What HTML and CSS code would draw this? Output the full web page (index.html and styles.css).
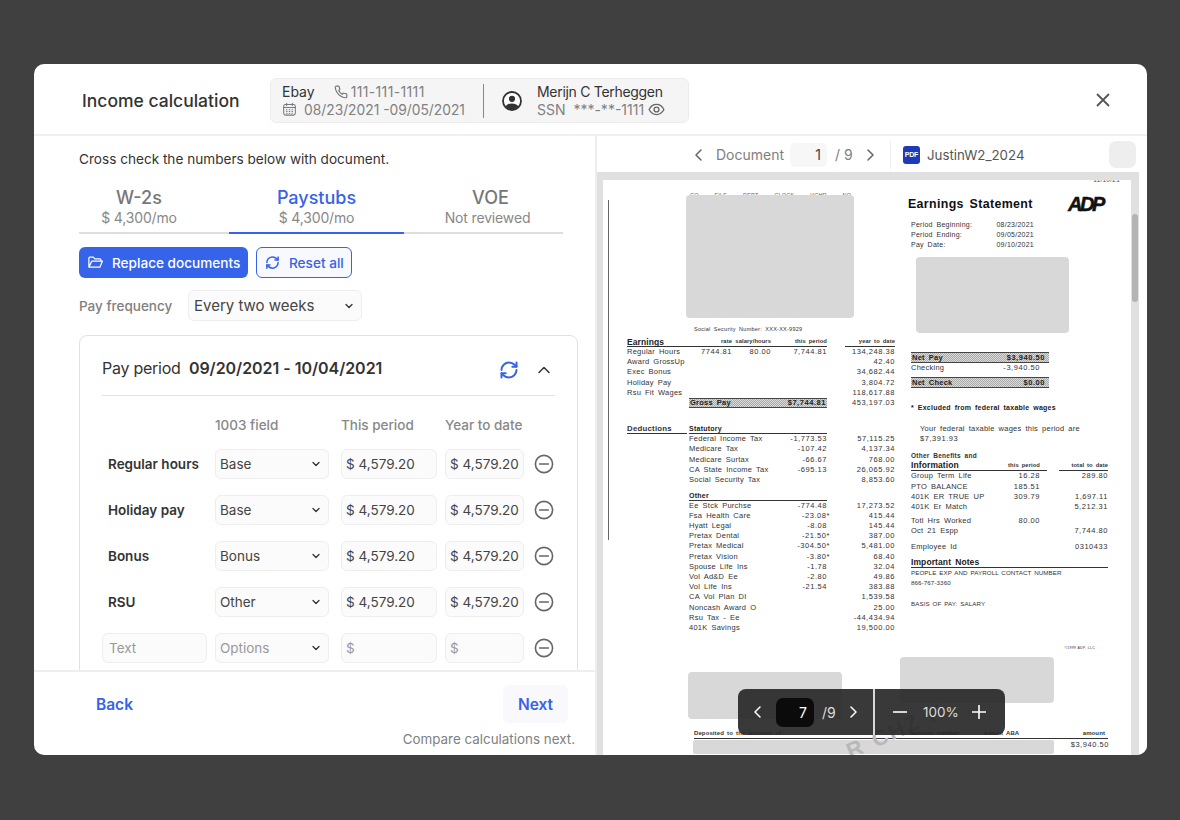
FILE: index.html
```html
<!DOCTYPE html>
<html lang="en">
<head>
<meta charset="utf-8">
<title>Income calculation</title>
<link rel="stylesheet" href="styles.css">
</head>
<body>
<svg class="defs" width="0" height="0" aria-hidden="true">
  <symbol id="i-down" viewBox="0 0 12 12"><path d="M3 4.500 6 7.500 9 4.500" fill="none" stroke="currentColor" stroke-width="1.300" stroke-linecap="round" stroke-linejoin="round"/></symbol>
  <symbol id="i-left" viewBox="0 0 16 16"><path d="M10 3 5 8l5 5" fill="none" stroke="currentColor" stroke-width="1.500" stroke-linecap="round" stroke-linejoin="round"/></symbol>
  <symbol id="i-right" viewBox="0 0 16 16"><path d="m6 3 5 5-5 5" fill="none" stroke="currentColor" stroke-width="1.500" stroke-linecap="round" stroke-linejoin="round"/></symbol>
  <symbol id="i-sync" viewBox="0 0 24 24"><g fill="none" stroke="currentColor" stroke-width="2.400" stroke-linecap="round" stroke-linejoin="round"><path d="M3 12a9 9 0 0 1 9-9 9.750 9.750 0 0 1 6.740 2.740L21 8"/><path d="M21 3v5h-5"/><path d="M21 12a9 9 0 0 1-9 9 9.750 9.750 0 0 1-6.740-2.740L3 16"/><path d="M8 16H3v5"/></g></symbol>
  <symbol id="i-minus" viewBox="0 0 20 20"><g fill="none" stroke="currentColor" stroke-width="1.600" stroke-linecap="round"><circle cx="10" cy="10" r="8.600"/><path d="M5.600 10h8.800"/></g></symbol>
</svg>
<div class="backdrop">
  <div class="modal">
    <header class="head">
      <h1 class="title">Income calculation</h1>
      <div class="info">
        <div class="info-co">
          <div class="info-line"><span class="info-name">Ebay</span><svg class="ic-phone" viewBox="0 0 24 24" width="14" height="14"><path d="M22 16.900v3a2 2 0 0 1-2.200 2 19.800 19.800 0 0 1-8.600-3.100 19.500 19.500 0 0 1-6-6A19.800 19.800 0 0 1 2.100 4.200 2 2 0 0 1 4.100 2h3a2 2 0 0 1 2 1.700c.1 1 .4 1.900.7 2.800a2 2 0 0 1-.5 2.100L8.100 9.900a16 16 0 0 0 6 6l1.300-1.300a2 2 0 0 1 2.100-.4c.9.3 1.800.6 2.800.7a2 2 0 0 1 1.700 2Z" fill="none" stroke="#777" stroke-width="2"/></svg><span class="info-mute info-tel">111-111-1111</span></div>
          <div class="info-line"><svg class="ic-cal" viewBox="0 0 16 16" width="15" height="15"><g fill="none" stroke="#777" stroke-width="1.100" stroke-linecap="round"><rect x="1.800" y="2.600" width="12.400" height="11.400" rx="2"/><path d="M1.800 5.800h12.400M5 1.400v2.200M11 1.400v2.200"/><path d="M4.800 8.200h.6M7.700 8.200h.6M10.600 8.200h.6M4.800 10.200h.6M7.700 10.200h.6M10.600 10.200h.6M4.800 12h.6M7.700 12h.6M10.600 12h.6"/></g></svg><span class="info-mute info-date">08/23/2021 -09/05/2021</span></div>
        </div>
        <div class="info-sep"></div>
        <svg class="ic-user" viewBox="0 0 20 20" width="20" height="20"><circle cx="10" cy="10" r="9" fill="#fff" stroke="#333" stroke-width="1.800"/><circle cx="10" cy="7.800" r="3.100" fill="#333"/><path d="M3.600 15.600C5 13 7.400 12.400 10 12.400s5 .6 6.400 3.200A9 9 0 0 1 10 19a9 9 0 0 1-6.400-3.400Z" fill="#333"/></svg>
        <div class="info-person">
          <div class="info-line"><span class="info-name info-full">Merijn C Terheggen</span></div>
          <div class="info-line"><span class="info-mute">SSN&nbsp; ***-**-1111</span><svg class="ic-eye" viewBox="0 0 18 18" width="17" height="17"><g fill="none" stroke="#666" stroke-width="1.400"><path d="M1.200 9C3 5.400 5.800 3.600 9 3.600s6 1.800 7.800 5.400c-1.800 3.600-4.600 5.400-7.800 5.400S3 12.600 1.200 9Z"/><circle cx="9" cy="9" r="2.600"/></g></svg></div>
        </div>
      </div>
      <svg class="close" viewBox="0 0 14 14" width="14" height="14"><path d="M1.500 1.500l11 11M12.500 1.500l-11 11" fill="none" stroke="#555" stroke-width="1.800" stroke-linecap="round"/></svg>
    </header>

    <main class="main">
      <section class="left">
        <div class="left-body">
          <p class="hint">Cross check the numbers below with document.</p>
          <nav class="tabs">
            <div class="tab"><div class="tab-name">W-2s</div><div class="tab-sub">$ 4,300/mo</div></div>
            <div class="tab tab-on"><div class="tab-name">Paystubs</div><div class="tab-sub">$ 4,300/mo</div></div>
            <div class="tab"><div class="tab-name tab-voe">VOE</div><div class="tab-sub">Not reviewed</div></div>
          </nav>
          <div class="actions">
            <button class="btn btn-solid"><svg viewBox="0 0 18 18" width="17" height="17"><path d="M2 14V4.300a1 1 0 0 1 1-1h3.600l1.700 1.900h5.400a1 1 0 0 1 1 1v1.400M2 14h11.600l2.700-6.400H5L2 14Z" fill="none" stroke="#fff" stroke-width="1.300" stroke-linejoin="round"/></svg>Replace documents</button>
            <button class="btn btn-line"><svg width="15" height="15"><use href="#i-sync"/></svg>Reset all</button>
          </div>
          <div class="freq">
            <span class="freq-label">Pay frequency</span>
            <div class="field freq-select"><span>Every two weeks</span><svg width="12" height="12"><use href="#i-down"/></svg></div>
          </div>
          <div class="card">
            <div class="card-head">
              <div class="card-title">Pay period <b>09/20/2021 - 10/04/2021</b></div>
              <svg class="card-sync" width="20" height="20"><use href="#i-sync"/></svg>
              <svg class="card-up" viewBox="0 0 16 16" width="16" height="16"><path d="M3 10.500 8 5.500l5 5" fill="none" stroke="#333" stroke-width="1.500" stroke-linecap="round" stroke-linejoin="round"/></svg>
            </div>
            <div class="grid">
              <span></span><span class="col">1003 field</span><span class="col">This period</span><span class="col">Year to date</span><span></span>

              <span class="lab">Regular hours</span>
              <div class="field"><span>Base</span><svg width="12" height="12"><use href="#i-down"/></svg></div>
              <div class="field">$ 4,579.20</div><div class="field">$ 4,579.20</div>
              <svg class="rm" width="20" height="20"><use href="#i-minus"/></svg>

              <span class="lab">Holiday pay</span>
              <div class="field"><span>Base</span><svg width="12" height="12"><use href="#i-down"/></svg></div>
              <div class="field">$ 4,579.20</div><div class="field">$ 4,579.20</div>
              <svg class="rm" width="20" height="20"><use href="#i-minus"/></svg>

              <span class="lab">Bonus</span>
              <div class="field"><span>Bonus</span><svg width="12" height="12"><use href="#i-down"/></svg></div>
              <div class="field">$ 4,579.20</div><div class="field">$ 4,579.20</div>
              <svg class="rm" width="20" height="20"><use href="#i-minus"/></svg>

              <span class="lab">RSU</span>
              <div class="field"><span>Other</span><svg width="12" height="12"><use href="#i-down"/></svg></div>
              <div class="field">$ 4,579.20</div><div class="field">$ 4,579.20</div>
              <svg class="rm" width="20" height="20"><use href="#i-minus"/></svg>

              <div class="field ph ph-text">Text</div>
              <div class="field ph"><span>Options</span><svg width="12" height="12"><use href="#i-down"/></svg></div>
              <div class="field ph">$</div><div class="field ph">$</div>
              <svg class="rm" width="20" height="20"><use href="#i-minus"/></svg>
            </div>
          </div>
        </div>
        <footer class="foot">
          <div class="foot-row"><span class="back">Back</span><span class="next">Next</span></div>
          <div class="foot-note">Compare calculations next.</div>
        </footer>
      </section>

      <section class="right">
        <div class="bar">
          <svg class="bar-prev" width="16" height="16"><use href="#i-left"/></svg>
          <span class="bar-doc">Document</span>
          <span class="bar-input">1</span>
          <span class="bar-total">/ 9</span>
          <svg class="bar-next" width="16" height="16"><use href="#i-right"/></svg>
          <span class="bar-sep"></span>
          <span class="pdf">PDF</span>
          <span class="bar-file">JustinW2_2024</span>
          <span class="bar-btn"></span>
        </div>
        <div class="stage">
          <div class="viewer">
            <article class="page">
              <span class="scan-line"></span>
              <span class="clip-date">11/10/21</span>
              <div class="stub">
                <div class="stub-l">
                  <div class="clip-head">CO FILE DEPT CLOCK VCHR NO</div>
                  <div class="cut cut-a"></div>
                  <div class="ssn">Social Security Number: XXX-XX-9929</div>
                  <div class="r r-head">
                    <span class="h-big e-name">Earnings</span><span class="hc c3">rate</span><span class="hc c4">salary/hours</span><span class="hc c5">this period</span><span class="hc c6">year to date</span>
                  </div>
                  <div class="r"><span class="a1">Regular Hours</span><span class="c3 n">7744.81</span><span class="c4 n">80.00</span><span class="c5 n">7,744.81</span><span class="c6 n">134,248.38</span></div>
                  <div class="r"><span class="a1">Award GrossUp</span><span class="c6 n">42.40</span></div>
                  <div class="r"><span class="a1">Exec Bonus</span><span class="c6 n">34,682.44</span></div>
                  <div class="r"><span class="a1">Holiday Pay</span><span class="c6 n">3,804.72</span></div>
                  <div class="r"><span class="a1">Rsu Fit Wages</span><span class="c6 n">118,617.88</span></div>
                  <div class="r"><div class="hatch hatch-gross"><b>Gross Pay</b><b class="hn">$7,744.81</b></div><span class="c6 n">453,197.03</span></div>

                  <div class="r r-ded"><span class="ded-name">Deductions</span><b class="ded-sub">Statutory</b></div>
                  <div class="r"><span class="a2">Federal Income Tax</span><span class="c5 n">-1,773.53</span><span class="c6 n">57,115.25</span></div>
                  <div class="r"><span class="a2">Medicare Tax</span><span class="c5 n">-107.42</span><span class="c6 n">4,137.34</span></div>
                  <div class="r"><span class="a2">Medicare Surtax</span><span class="c5 n">-66.67</span><span class="c6 n">768.00</span></div>
                  <div class="r"><span class="a2">CA State Income Tax</span><span class="c5 n">-695.13</span><span class="c6 n">26,065.92</span></div>
                  <div class="r"><span class="a2">Social Security Tax</span><span class="c6 n">8,853.60</span></div>

                  <div class="r r-other"><b class="ded-sub">Other</b></div>
                  <div class="r"><span class="a2">Ee Stck Purchse</span><span class="c5 n">-774.48</span><span class="c6 n">17,273.52</span></div>
                  <div class="r"><span class="a2">Fsa Health Care</span><span class="c5 n star">-23.08*</span><span class="c6 n">415.44</span></div>
                  <div class="r"><span class="a2">Hyatt Legal</span><span class="c5 n">-8.08</span><span class="c6 n">145.44</span></div>
                  <div class="r"><span class="a2">Pretax Dental</span><span class="c5 n star">-21.50*</span><span class="c6 n">387.00</span></div>
                  <div class="r"><span class="a2">Pretax Medical</span><span class="c5 n star">-304.50*</span><span class="c6 n">5,481.00</span></div>
                  <div class="r"><span class="a2">Pretax Vision</span><span class="c5 n star">-3.80*</span><span class="c6 n">68.40</span></div>
                  <div class="r"><span class="a2">Spouse Life Ins</span><span class="c5 n">-1.78</span><span class="c6 n">32.04</span></div>
                  <div class="r"><span class="a2">Vol Ad&amp;D Ee</span><span class="c5 n">-2.80</span><span class="c6 n">49.86</span></div>
                  <div class="r"><span class="a2">Vol Life Ins</span><span class="c5 n">-21.54</span><span class="c6 n">383.88</span></div>
                  <div class="r"><span class="a2">CA Vol Plan DI</span><span class="c6 n">1,539.58</span></div>
                  <div class="r"><span class="a2">Noncash Award O</span><span class="c6 n">25.00</span></div>
                  <div class="r"><span class="a2">Rsu Tax - Ee</span><span class="c6 n">-44,434.94</span></div>
                  <div class="r"><span class="a2">401K Savings</span><span class="c6 n">19,500.00</span></div>
                </div>

                <div class="stub-r">
                  <div class="es-head"><span class="es-title">Earnings Statement</span><span class="adp">ADP</span></div>
                  <div class="per"><span>Period Beginning:</span><span>08/23/2021</span></div>
                  <div class="per"><span>Period Ending:</span><span>09/05/2021</span></div>
                  <div class="per"><span>Pay Date:</span><span>09/10/2021</span></div>
                  <div class="cut cut-b"></div>
                  <div class="hatch hatch-net"><b>Net Pay</b><b class="hn">$3,940.50</b></div>
                  <div class="chk"><span>Checking</span><span class="num">-3,940.50</span></div>
                  <div class="hatch hatch-net"><b>Net Check</b><b class="hn">$0.00</b></div>
                  <div class="excl"><b>* Excluded from federal taxable wages</b></div>
                  <div class="fed">Your federal taxable wages this period are<br><span class="num">$7,391.93</span></div>
                  <div class="oth-a"><b>Other Benefits and</b></div>
                  <div class="b b-head"><span class="b-info">Information</span><span class="hc">this period</span><span class="hc">total to date</span></div>
                  <div class="b"><span>Group Term Life</span><span class="n">16.28</span><span class="n">289.80</span></div>
                  <div class="b"><span>PTO BALANCE</span><span class="n">185.51</span><span></span></div>
                  <div class="b"><span>401K ER TRUE UP</span><span class="n">309.79</span><span class="n">1,697.11</span></div>
                  <div class="b"><span>401K Er Match</span><span></span><span class="n">5,212.31</span></div>
                  <div class="b b-gap"><span>Totl Hrs Worked</span><span class="n">80.00</span><span></span></div>
                  <div class="b"><span>Oct 21 Espp</span><span></span><span class="n">7,744.80</span></div>
                  <div class="b b-gap2"><span>Employee Id</span><span></span><span class="n">0310433</span></div>
                  <div class="notes-h">Important Notes</div>
                  <div class="small">PEOPLE EXP AND PAYROLL CONTACT NUMBER</div>
                  <div class="small">866-767-3360</div>
                  <div class="small small-gap">BASIS OF PAY: SALARY</div>
                  <div class="copy">&copy;1999 ADP, LLC</div>
                </div>
              </div>
              <div class="cuts">
                <div class="cut cut-c"></div>
                <div class="cut cut-d"></div>
              </div>
              <div class="dep">
                <span class="dep-1">Deposited to the account of</span><span class="dep-2">account number</span><span class="dep-3">transit ABA</span><span class="dep-4">amount</span>
              </div>
              <div class="dep-row"><div class="cut cut-e"></div><span class="dep-amt num">$3,940.50</span></div>
              <span class="stamp">R CHZ K</span>
            </article>
            <div class="track"><div class="thumb"></div></div>
          </div>
          <div class="gutter"></div>
        </div>
        <div class="float">
          <svg class="fl-prev" width="16" height="16"><use href="#i-left"/></svg>
          <span class="fl-input">7</span>
          <span class="fl-total">/9</span>
          <svg class="fl-next" width="16" height="16"><use href="#i-right"/></svg>
          <span class="fl-sep"></span>
          <svg class="fl-minus" viewBox="0 0 16 16" width="16" height="16"><path d="M1 8h14" stroke="#fff" stroke-width="1.600"/></svg>
          <span class="fl-zoom">100%</span>
          <svg class="fl-plus" viewBox="0 0 16 16" width="16" height="16"><path d="M1 8h14M8 1v14" stroke="#fff" stroke-width="1.600"/></svg>
        </div>
      </section>
    </main>
  </div>
</div>
</body>
</html>
```
FILE: styles.css
```css
* { box-sizing: border-box; }
html, body { margin: 0; height: 100%; }
body { background: #404040; font-family: Inter, "Noto Sans", sans-serif; color: #333; overflow: hidden; }
.defs { position: absolute; }
b { font-weight: 700; }

.backdrop { height: 820px; padding: 64px 33px 65px 34px; }
.modal { height: 100%; background: #fff; border-radius: 10px; overflow: hidden; display: flex; flex-direction: column; }

.head { height: 72px; flex: none; display: flex; align-items: center; padding: 3px 37px 0 48px; border-bottom: 2px solid #f0f0f0; }
.title { margin: 0; width: 188px; font-size: 17.500px; line-height: 24px; font-weight: 500; color: #333; }
.info { width: 419px; height: 45px; display: flex; align-items: center; background: #f5f5f5; border: 1px solid #ececec; border-radius: 6px; padding-left: 11px; }
.info-co { width: 201px; }
.info-line { display: flex; align-items: center; height: 18px; font-size: 14px; line-height: 18px; white-space: nowrap; }
.info-name { color: #333; }
.info-full { letter-spacing: -.3px; }
.info-mute { color: #808080; }
.info-tel { letter-spacing: .35px; }
.info-date { font-size: 13.800px; }
.ic-phone { margin: 0 3px 0 19px; }
.ic-cal { margin-right: 7px; }
.info-sep { width: 1px; height: 34px; background: #888; }
.ic-user { margin: 0 15px 0 18px; }
.ic-eye { margin-left: 4px; }
.close { margin: -1px 0 0 auto; }

.main { flex: 1; display: flex; min-height: 0; }
.left { width: 563px; flex: none; display: flex; flex-direction: column; border-right: 2px solid #ededed; }
.left-body { flex: 1; min-height: 0; overflow: hidden; padding: 14px 18px 0 45px; }
.hint { margin: 0; font-size: 13.600px; line-height: 18px; color: #333; }

.tabs { display: flex; width: 484px; margin-top: 10px; border-bottom: 2px solid #dedede; height: 56px; }
.tab { flex: none; text-align: center; padding-top: 9px; height: 56px; }
.tab:nth-child(1) { width: 150px; padding-right: 30px; }
.tab:nth-child(2) { width: 175px; }
.tab:nth-child(3) { width: 159px; padding-left: 8px; }
.tab-on { border-bottom: 2px solid #3563e9; }
.tab-name { font-size: 18px; line-height: 22px; font-weight: 500; color: #777; }
.tab-voe { padding-left: 6px; }
.tab-sub { font-size: 14px; line-height: 18px; color: #888; letter-spacing: -.15px; }
.tab-on .tab-name { color: #3563e9; }

.actions { display: flex; gap: 8px; margin-top: 13px; }
.btn { height: 31px; display: flex; align-items: center; border-radius: 6px; font: 500 13.600px/18px Inter, sans-serif; padding: 0; }
.btn-solid { width: 169px; background: #3563e9; color: #fff; border: 0; padding-left: 8px; gap: 8px; }
.btn-line { width: 96px; background: #f8f8ff; color: #3563e9; border: 1px solid #3563e9; padding-left: 8px; gap: 9px; }

.freq { display: flex; align-items: center; margin-top: 12px; }
.freq-label { width: 109px; font-size: 13.500px; font-weight: 500; color: #808080; }
.field { height: 30px; display: flex; align-items: center; justify-content: space-between; background: #fbfbfb; border: 1px solid #eeeeee; border-radius: 6px; padding: 0 4px; font-size: 13.500px; color: #444; white-space: nowrap; }
.field svg { color: #333; flex: none; margin-right: 2px; }
.freq-select { width: 174px; height: 31px; font-size: 15px; padding: 0 4px 0 5px; }

.card { width: 499px; margin-top: 14px; border: 1px solid #e2e2e2; border-radius: 8px; padding: 0 22px; height: 420px; }
.card-head { height: 60px; display: flex; align-items: center; border-bottom: 1px solid #e2e2e2; padding-top: 8px; }
.card-title { font-size: 16px; line-height: 22px; color: #333; margin-top: -4px; letter-spacing: -.25px; }
.card-title b { font-weight: 600; margin-left: 4px; letter-spacing: -.03px; }
.card-sync { margin-left: auto; color: #3563e9; }
.card-up { margin: 0 3px 0 17px; }

.grid { display: grid; grid-template-columns: 113px 126px 104px 89px 20px; grid-template-rows: 17px; grid-auto-rows: 30px; row-gap: 16px; margin-top: 20px; align-items: center; }
.grid .field { width: 100%; }
.grid > :nth-child(5n+2) { width: 114px; }
.grid > :nth-child(5n+3) { width: 96px; }
.grid > :nth-child(5n+4) { width: 79px; }
.col { font-size: 13.500px; font-weight: 500; color: #888; white-space: nowrap; }
.lab { font-size: 13.500px; font-weight: 600; color: #333; padding-left: 6px; white-space: nowrap; }
.rm { color: #666; }
.ph { color: #999; }
.ph-text { width: 105px !important; padding-left: 6px; }

.foot { height: 85px; flex: none; border-top: 2px solid #eeeeee; padding: 13px 27px 0 62px; }
.foot-row { display: flex; justify-content: space-between; align-items: center; height: 38px; }
.back { font-size: 15.500px; font-weight: 600; color: #3563e9; }
.next { width: 65px; height: 38px; display: flex; align-items: center; justify-content: center; background: #f8f8fd; border-radius: 6px; font-size: 15.500px; font-weight: 600; color: #3563e9; }
.foot-note { text-align: right; font-size: 13.400px; line-height: 18px; color: #808080; margin: 7px -7px 0 0; }

.right { flex: 1; min-width: 0; display: flex; flex-direction: column; position: relative; }
.bar { height: 36px; flex: none; display: flex; align-items: center; padding: 1px 0 0 94px; color: #808080; font-size: 14px; }
.bar-prev { color: #666; }
.bar-doc { margin-left: 9px; width: 74px; }
.bar-input { width: 37px; height: 24px; background: #f7f7f7; border-radius: 5px; text-align: right; padding-right: 6px; line-height: 24px; color: #444; }
.bar-total { margin-left: 8px; width: 27px; }
.bar-next { color: #666; }
.bar-sep { width: 1px; height: 28px; background: #eee; margin: 0 12px 0 12px; }
.pdf { width: 17px; height: 18px; background: #1c3bb5; border-radius: 3px; color: #fff; font: 700 7px/18px "Liberation Sans", sans-serif; text-align: center; letter-spacing: -.2px; }
.bar-file { margin-left: 7px; color: #555; font-size: 13.300px; width: 182px; }
.bar-btn { width: 27px; height: 27px; background: #eeeeee; border-radius: 7px; }

.stage { flex: 1; min-height: 0; display: flex; }
.viewer { width: 542px; flex: none; background: #e0e0e0; padding: 8px 0 0 6px; display: flex; overflow: hidden; }
.gutter { flex: 1; background: #fff; }
.track { width: 8px; padding: 34px 1px 0 1px; }
.thumb { height: 88px; background: #b4b4b4; border-radius: 3px; }

.page { width: 528px; height: 640px; flex: none; background: #fff; padding-left: 24px; position: relative; color: #333; font: 7.500px/10.200px "Liberation Sans", Arial, sans-serif; letter-spacing: .25px; word-spacing: 1.600px; overflow: hidden; white-space: nowrap; }
.scan-line { position: absolute; left: 5px; top: 20px; width: 1px; height: 340px; background: #666; }
.clip-date { position: absolute; right: 11px; top: -5px; font-size: 6.500px; color: #555; }
.stub { display: flex; gap: 16px; }
.stub-l { width: 268px; flex: none; }
.stub-r { width: 197px; flex: none; }
.cut { background: #d8d8d8; border-radius: 4px; }
.clip-head { height: 3px; margin: 12px 0 0 63px; overflow: hidden; font-size: 5.500px; line-height: 7px; color: #666; word-spacing: 14px; }
.cut-a { width: 168px; height: 123px; margin: 0 0 0 59px; }
.ssn { margin: 6px 0 0 67px; height: 10px; font-size: 5.500px; line-height: 10px; }

.r { display: grid; grid-template-columns: 62px 43px 39px 56px 68px; height: 10.200px; }
.n, .num { text-align: right; letter-spacing: .55px; }
.a1 { grid-column: 1; }
.a2 { grid-column: 2; }
.c3 { grid-column: 2; }
.c4 { grid-column: 3; }
.c5 { grid-column: 4; }
.c6 { grid-column: 5; }
.star { margin-right: -3px; }
.hc { font-size: 5.800px; font-weight: 700; text-align: right; letter-spacing: .1px; word-spacing: 1.200px; }
.r-head { height: 10px; margin-top: 3px; background: linear-gradient(#333, #333) 0 100% / 200px 1px no-repeat, linear-gradient(#333, #333) 218px 100% / 50px 1px no-repeat; }
.h-big { font-size: 8.500px; font-weight: 700; color: #222; letter-spacing: .1px; }
.r-head .hc { line-height: 9px; }
.hatch { display: flex; justify-content: space-between; align-items: center; background: repeating-conic-gradient(#a8a8a8 0 25%, #dcdcdc 0 50%) 0 0 / 2px 2px; border-top: 1px solid #444; border-bottom: 1px solid #444; padding: 0 1px; color: #222; }
.hn { letter-spacing: .55px; }
.hatch-gross { grid-column: 2 / 5; height: 10.200px; font-size: 7.500px; line-height: 8px; }
.r-ded { height: 10px; margin-top: 16px; background: linear-gradient(#333, #333) 0 100% / 60px 1px no-repeat, linear-gradient(#333, #333) 62px 100% / 138px 1px no-repeat; }
.ded-name { font-weight: 700; font-size: 7.800px; line-height: 9px; }
.ded-sub { grid-column: 2 / 5; font-size: 7px; line-height: 9px; color: #222; }
.r-other { height: 10px; margin-top: 5.600px; background: linear-gradient(#333, #333) 62px 100% / 138px 1px no-repeat; }

.es-head { height: 19px; margin-top: 15px; display: flex; align-items: center; justify-content: space-between; }
.es-title { margin-left: -3px; font-size: 12.400px; font-weight: 700; color: #111; letter-spacing: .35px; word-spacing: 2px; line-height: 19px; }
.adp { font: italic 700 20px/19px "Liberation Sans", sans-serif; color: #111; letter-spacing: -2.400px; word-spacing: 0; margin-right: 5px; -webkit-text-stroke: .5px #111; }
.per { width: 123px; display: flex; justify-content: space-between; height: 10.200px; font-size: 7px; }
.es-head + .per { margin-top: 6px; }
.cut-b { width: 153px; height: 76px; margin: 6.400px 0 0 5px; }
.hatch-net { width: 138px; height: 11px; font-size: 7.500px; line-height: 9px; padding-right: 4px; }
.cut-b + .hatch-net { margin-top: 19px; }
.chk { width: 129px; height: 14px; display: flex; justify-content: space-between; line-height: 9px; margin-top: 0; }
.excl { height: 10px; margin-top: 15px; font-size: 7px; color: #222; }
.fed { margin: 11px 0 0 9px; }
.oth-a { height: 10px; margin-top: 7px; font-size: 6.500px; }
.b { display: grid; grid-template-columns: 95px 34px 68px; height: 10.200px; }
.b-head { height: 10px; background: linear-gradient(#333, #333) 0 100% / 136px 1px no-repeat, linear-gradient(#333, #333) 148px 100% / 49px 1px no-repeat; }
.b-info { font-size: 8.500px; font-weight: 700; color: #222; line-height: 9px; letter-spacing: .1px; }
.b-head .hc { line-height: 9px; }
.b-gap { margin-top: 4px; }
.b-gap2 { margin-top: 5.600px; }
.notes-h { height: 10px; margin-top: 6px; border-bottom: 1px solid #333; font-size: 8.500px; line-height: 9px; font-weight: 700; color: #222; letter-spacing: .1px; }
.small { font-size: 6.200px; height: 10.200px; letter-spacing: .1px; word-spacing: 1px; }
.small-gap { margin-top: 10px; }
.copy { margin-top: 34px; height: 10px; font-size: 3.500px; text-align: right; padding-right: 13px; word-spacing: .4px; }

.cuts { display: flex; gap: 58px; margin: 4px 0 0 61px; }
.cut-c { width: 154px; height: 47px; margin-top: 15px; }
.cut-d { width: 154px; height: 46px; }
.dep { display: flex; width: 414px; height: 10px; margin: 10px 0 0 67px; border-bottom: 1px solid #333; font-size: 6px; line-height: 9px; font-weight: 700; letter-spacing: .1px; word-spacing: 1.400px; }
.dep-1 { width: 216px; }
.dep-2 { width: 74px; }
.dep-3 { width: 88px; }
.dep-4 { width: 33px; text-align: right; }
.dep-row { display: flex; margin-left: 66px; justify-content: space-between; width: 416px; }
.cut-e { width: 361px; height: 14px; margin-top: 1px; border-radius: 2px; }
.dep-amt { line-height: 9px; margin-top: 1px; }
.stamp { position: absolute; left: 240px; top: 540px; font: 700 22px/22px "Liberation Sans", sans-serif; color: #b8b8b8; letter-spacing: 2px; transform: rotate(-24deg); }

.float { position: absolute; left: 141px; bottom: 20px; width: 267px; height: 46px; display: flex; align-items: center; background: rgba(40, 40, 40, .92); border-radius: 8px; color: #fff; font-size: 14px; }
.fl-prev { margin-left: 12px; }
.fl-input { margin-left: 10px; width: 38px; height: 29px; background: #0b0b0b; border-radius: 7px; text-align: right; padding-right: 7px; line-height: 29px; }
.fl-total { margin-left: 8px; width: 23px; color: #ddd; }
.fl-sep { width: 2px; height: 46px; background: #d8d8d8; margin-left: 12px; }
.fl-minus { margin-left: 17px; }
.fl-zoom { margin-left: 15px; width: 40px; font-size: 13.500px; color: #ddd; }
.fl-plus { margin-left: 8px; }
```
